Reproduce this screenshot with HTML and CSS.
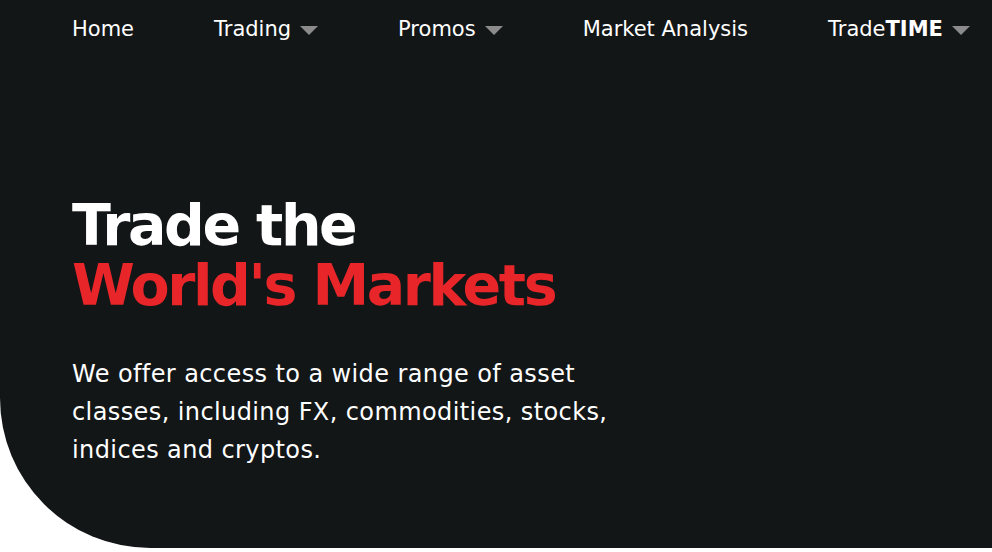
FILE: index.html
```html
<!DOCTYPE html>
<html lang="en">
<head>
<meta charset="utf-8">
<title>Trade the World's Markets</title>
<link rel="stylesheet" href="styles.css">
</head>
<body>
<section class="hero">
  <nav class="nav">
    <a class="nav-item" href="#"><span>Home</span></a>
    <a class="nav-item" href="#"><span>Trading</span><span class="caret"></span></a>
    <a class="nav-item" href="#"><span>Promos</span><span class="caret"></span></a>
    <a class="nav-item" href="#"><span>Market Analysis</span></a>
    <a class="nav-item" href="#"><span>Trade<b>TIME</b></span><span class="caret"></span></a>
  </nav>
  <div class="content">
    <h1 class="title">Trade the<br><span class="accent">World's Markets</span></h1>
    <p class="lead">We offer access to a wide range of asset classes, including FX, commodities, stocks, indices and cryptos.</p>
  </div>
</section>
</body>
</html>
```
FILE: styles.css
```css
html, body {
  margin: 0;
  padding: 0;
  background: #ffffff;
}
body {
  font-family: "DejaVu Sans", "Open Sans", sans-serif;
  color: #ffffff;
}
.hero {
  height: 548px;
  background: #131617;
  border-bottom-left-radius: 150px 150px;
  overflow: hidden;
}
.nav {
  display: flex;
  align-items: center;
  gap: 80px;
  padding: 17px 0 0 72px;
  height: 24px;
}
.nav-item {
  display: flex;
  align-items: center;
  gap: 9px;
  color: #ffffff;
  text-decoration: none;
  font-size: 21px;
  line-height: 24px;
  letter-spacing: 0;
  white-space: nowrap;
}
.nav-item b {
  font-weight: 700;
}
.caret {
  display: inline-block;
  width: 0;
  height: 0;
  border-left: 9px solid transparent;
  border-right: 9px solid transparent;
  border-top: 9px solid #8b8b8b;
  margin-top: 2px;
}
.content {
  padding: 154px 0 0 72px;
}
.title {
  margin: 0;
  font-size: 57px;
  line-height: 60px;
  font-weight: 700;
  letter-spacing: -2.4px;
}
.accent {
  color: #e8262a;
}
.lead {
  margin: 40px 0 0;
  width: 560px;
  font-size: 24px;
  line-height: 38px;
  font-weight: 500;
  letter-spacing: 0.4px;
}
```
